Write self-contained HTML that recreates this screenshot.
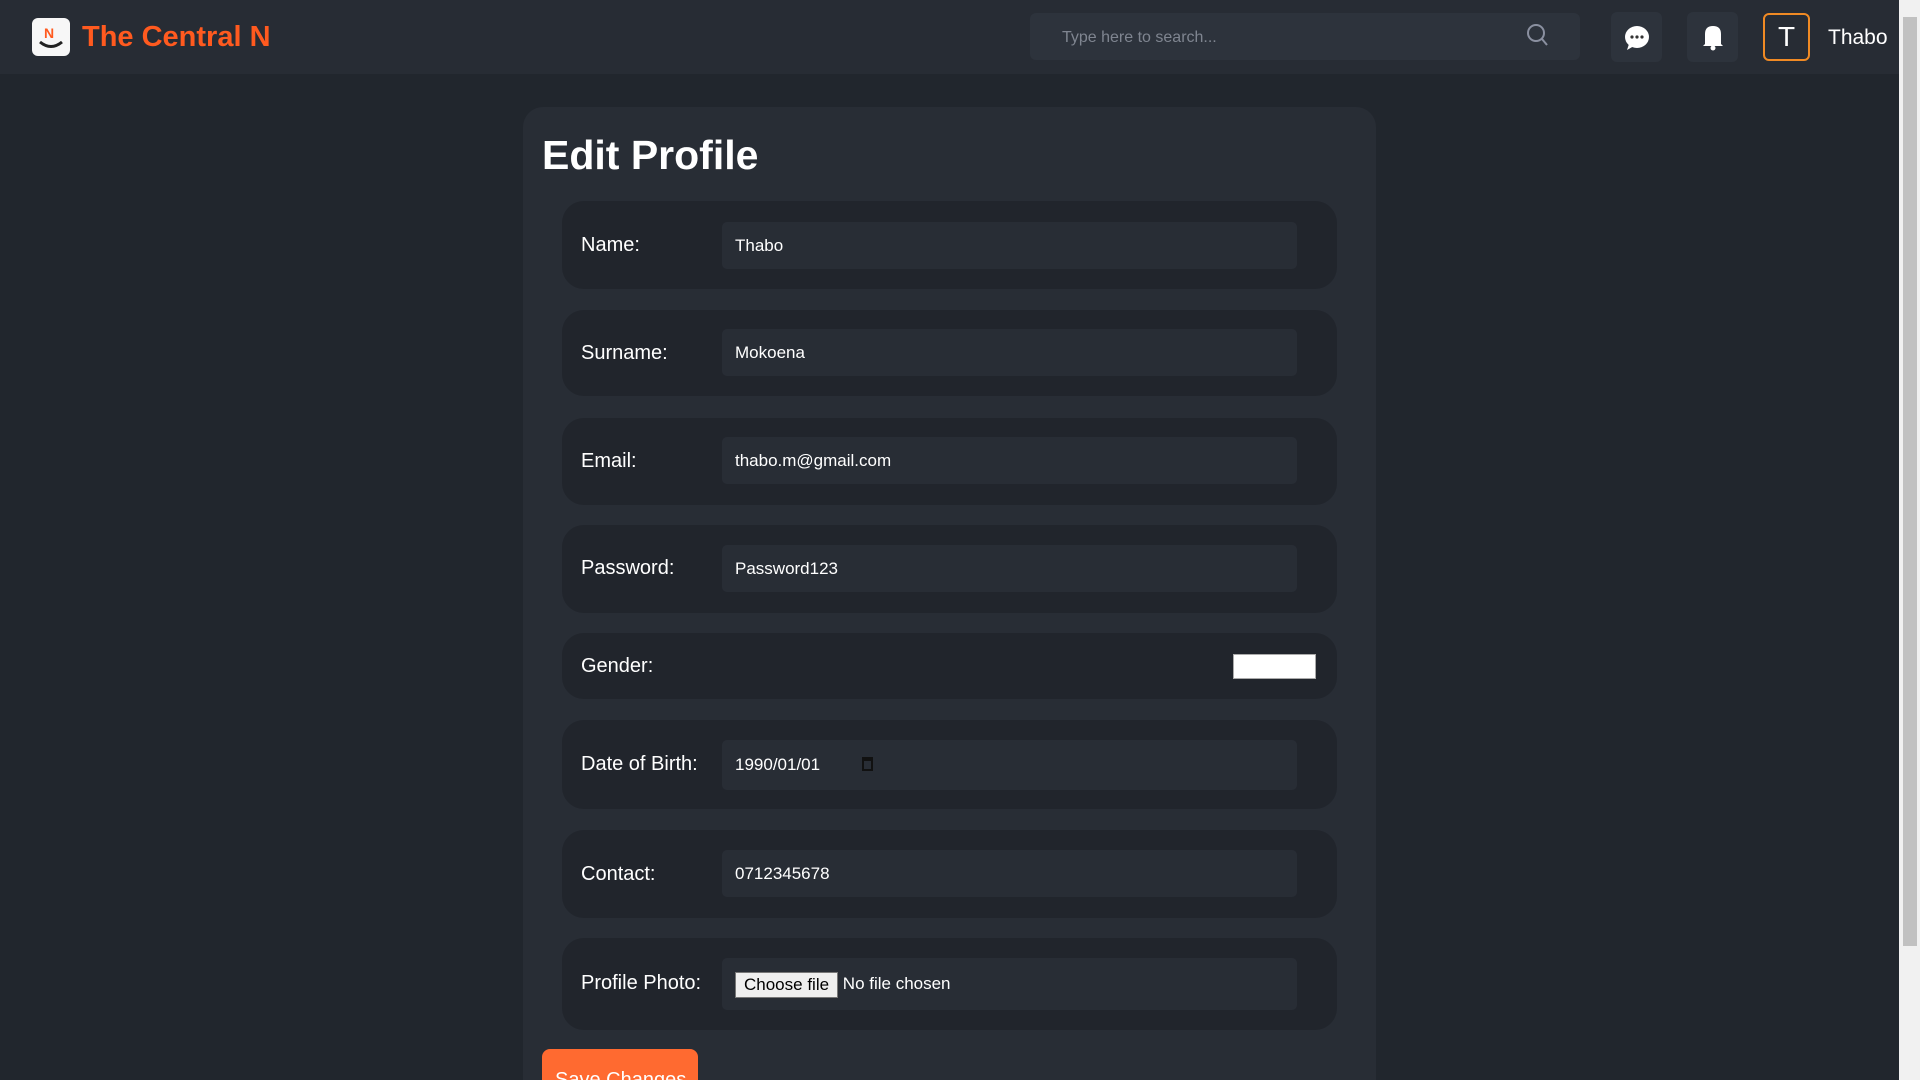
<!DOCTYPE html>
<html style="overflow:hidden;height:1080px"><head><meta charset="utf-8"><style>
*{box-sizing:border-box;margin:0;padding:0}
body{width:1920px;height:1080px;overflow:hidden;background:#21262d;font-family:"Liberation Sans",sans-serif;color:#fff;position:relative}
.hdr{position:absolute;left:0;top:0;width:1899px;height:74px;background:#272c34}
.logo{position:absolute;left:32px;top:18px;width:38px;height:38px;background:#f7f7f7;border-radius:6px}
.brand{position:absolute;left:82px;top:21px;font-size:29px;font-weight:bold;color:#ff5a1f}
.search{position:absolute;left:1030px;top:13px;width:550px;height:47px;background:#2d333c;border-radius:6px}
.search span{position:absolute;left:32px;top:16px;font-size:16px;color:#7f8590}
.ib{position:absolute;top:12px;width:51px;height:50px;background:#2d333c;border-radius:6px}
.av{position:absolute;left:1763px;top:13px;width:47px;height:48px;border:2px solid #f08a24;border-radius:6px;font-size:28px;text-align:center;line-height:44px}
.uname{position:absolute;left:1828px;top:26px;font-size:21px}
.card{position:absolute;left:523px;top:107px;width:853px;height:973px;background:#282d35;border-radius:20px 20px 0 0}
h1{position:absolute;left:542px;top:132px;font-size:41px;font-weight:bold}
.row{position:absolute;left:562px;width:775px;background:#21252c;border-radius:22px}
.row label{position:absolute;left:19px;font-size:20px}
.inp{position:absolute;left:160px;width:575px;height:47px;background:#282d35;border-radius:5px;font-size:17px;padding-left:13px;line-height:47px}
.btn{position:absolute;left:542px;top:1049px;width:156px;height:40px;background:#ff6a30;border-radius:8px;font-size:20px;padding:20px 0 0 13px}
.sb{position:absolute;left:1899px;top:0;width:21px;height:1080px;background:#f1f1f1}
.th{position:absolute;left:1903px;top:17px;width:14px;height:929px;background:#c1c1c1}
</style></head><body>
<div class="hdr">
<div class="logo"><svg width="38" height="38"><text x="12" y="20" font-size="14" font-weight="bold" fill="#ff5a1f" font-family="Liberation Sans">N</text><path d="M8 24 Q19 33 30 24" stroke="#222" stroke-width="3" fill="none"/></svg></div>
<div class="brand">The Central N</div>
<div class="search"><span>Type here to search...</span><svg style="position:absolute;left:495px;top:9px" width="26" height="28"><circle cx="11" cy="11" r="8" stroke="#8a90a0" stroke-width="2" fill="none"/><path d="M17 17 L22 23" stroke="#8a90a0" stroke-width="2"/></svg></div>
<div class="ib" style="left:1611px"><svg width="51" height="50"><ellipse cx="26" cy="25" rx="12" ry="11" fill="#fff"/><path d="M18 32 L16 38 L23 34Z" fill="#fff"/><circle cx="21" cy="25" r="1.6" fill="#333"/><circle cx="26" cy="25" r="1.6" fill="#333"/><circle cx="31" cy="25" r="1.6" fill="#333"/></svg></div>
<div class="ib" style="left:1687px"><svg width="51" height="50"><path d="M18 32 L18 22 Q18 14 26 14 Q34 14 34 22 L34 32 L36 34 L16 34Z" fill="#fff"/><circle cx="26" cy="36" r="2.5" fill="#fff"/></svg></div>
<div class="av">T</div>
<div class="uname">Thabo</div>
</div>
<div class="card"></div>
<h1>Edit Profile</h1>
<div class="row" style="top:201px;height:88px"><label style="top:33px">Name:</label><div class="inp" style="top:21px">Thabo</div></div>
<div class="row" style="top:310px;height:86px"><label style="top:32px">Surname:</label><div class="inp" style="top:19px">Mokoena</div></div>
<div class="row" style="top:418px;height:87px"><label style="top:32px">Email:</label><div class="inp" style="top:19px">thabo.m@gmail.com</div></div>
<div class="row" style="top:525px;height:88px"><label style="top:32px">Password:</label><div class="inp" style="top:20px">Password123</div></div>
<div class="row" style="top:633px;height:66px"><label style="top:22px">Gender:</label><div style="position:absolute;left:671px;top:21px;width:83px;height:25px;background:#fff;border:1px solid #aaa"></div></div>
<div class="row" style="top:720px;height:89px"><label style="top:33px">Date of Birth:</label><div class="inp" style="top:20px;height:50px;line-height:50px">1990/01/01<span style="position:absolute;left:140px;top:17px;width:11px;height:14px;border:2px solid #111;border-top-width:4px"></span></div></div>
<div class="row" style="top:830px;height:88px"><label style="top:33px">Contact:</label><div class="inp" style="top:20px">0712345678</div></div>
<div class="row" style="top:938px;height:92px"><label style="top:34px">Profile Photo:</label><div class="inp" style="top:20px;height:52px;line-height:52px;padding-left:13px"><span style="display:inline-block;background:#efefef;color:#000;border:1px solid #777;height:26px;line-height:24px;padding:0 8px;font-size:17px;vertical-align:middle">Choose file</span> No file chosen</div></div>
<div class="btn">Save Changes</div>
<div class="sb"></div><div class="th"></div>
</body></html>
